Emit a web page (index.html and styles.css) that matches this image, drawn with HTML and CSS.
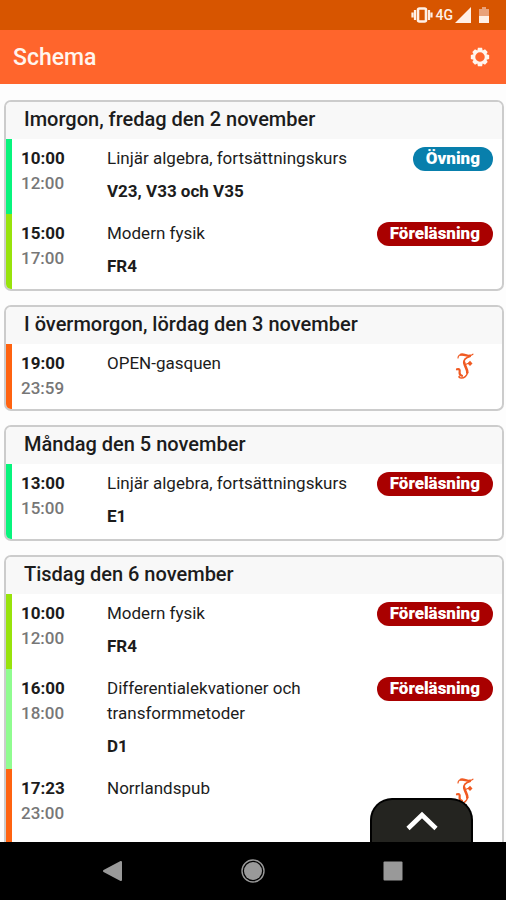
FILE: index.html
```html
<!DOCTYPE html>
<html lang="sv">
<head>
<meta charset="utf-8">
<meta name="viewport" content="width=device-width, initial-scale=1">
<title>Schema</title>
<link rel="stylesheet" href="styles.css">
</head>
<body>
<svg class="defs" aria-hidden="true">
  <symbol id="logo" viewBox="0 0 20 28">
    <g fill="none" stroke="currentColor" stroke-linecap="round" stroke-linejoin="round">
      <path stroke-width="1.200" d="M3 6C3 3.800 5 2.200 7.500 2.600"/>
      <path stroke-width="2.400" d="M6 2.600C9 1.700 12 4.600 15 3.700"/>
      <path stroke-width="1.200" d="M15 3.700Q17 3.300 18 2.200"/>
      <path stroke-width="1.700" d="M15 4.500C11 5.500 8.500 8 9 11"/>
      <path stroke-width="2.600" d="M9.200 10.500C9.500 14 12.600 17 12.300 20.500"/>
      <path stroke-width="1.500" d="M12.500 20.500C12 24 9 26 6.500 26C4.500 26 3.500 25.200 4.200 24.400"/>
      <path stroke-width="2.200" d="M2 17.300C4.500 16.500 5 18 4.600 20.500C4.400 23 5.500 23.400 7 23.800"/>
      <path stroke-width="1.200" d="M10.500 12.500L14 11"/>
    </g>
    <path fill="currentColor" d="M15 8.800L17.500 11.500L15 14L12.500 11.500Z"/>
  </symbol>
</svg>
<div class="screen">
  <div class="status">
    <svg class="vibrate" viewBox="0 0 22 16" aria-hidden="true"><rect x="7" y="1.500" width="8" height="13" rx="1.500" fill="none" stroke="currentColor" stroke-width="2.600"/><path d="M4 3v10M18 3v10M1.500 5.500v5M20.500 5.500v5" fill="none" stroke="currentColor" stroke-width="2.200"/></svg>
    <span class="network">4G</span>
    <svg class="signal" viewBox="0 0 16 16" aria-hidden="true"><path d="M0 16L16 0V16Z" fill="currentColor"/></svg>
    <svg class="battery" viewBox="0 0 10 16" aria-hidden="true"><path d="M0 2H3V0H7V2H10V9H0Z" fill="#e9a27a"/><path d="M0 9H10V16H0Z" fill="currentColor"/></svg>
  </div>
  <header class="bar">
    <h1>Schema</h1>
    <button class="settings" type="button" aria-label="Inställningar">
      <svg viewBox="0 0 24 24" aria-hidden="true"><path fill="currentColor" fill-rule="evenodd" d="M9.500 1H14.500L15.200 4.300L18 2.800L21.200 6L19.700 8.800L23 9.500V14.500L19.700 15.200L21.200 18L18 21.200L15.200 19.700L14.500 23H9.500L8.800 19.700L6 21.200L2.800 18L4.300 15.200L1 14.500V9.500L4.300 8.800L2.800 6L6 2.800L8.800 4.300ZM12 6.300A5.700 5.700 0 1 0 12 17.700A5.700 5.700 0 1 0 12 6.300Z"/></svg>
    </button>
  </header>
  <main class="days">
    <section class="day">
      <h2>Imorgon, fredag den 2 november</h2>
      <article class="event spring">
        <div class="time"><b>10:00</b><span>12:00</span></div>
        <div class="what"><p>Linjär algebra, fortsättningskurs</p><p class="room">V23, V33 och V35</p></div>
        <span class="tag exercise">Övning</span>
      </article>
      <article class="event lime">
        <div class="time"><b>15:00</b><span>17:00</span></div>
        <div class="what"><p>Modern fysik</p><p class="room">FR4</p></div>
        <span class="tag">Föreläsning</span>
      </article>
    </section>
    <section class="day">
      <h2>I övermorgon, lördag den 3 november</h2>
      <article class="event orange">
        <div class="time"><b>19:00</b><span>23:59</span></div>
        <div class="what"><p>OPEN-gasquen</p></div>
        <svg class="logo" aria-hidden="true"><use href="#logo"/></svg>
      </article>
    </section>
    <section class="day">
      <h2>Måndag den 5 november</h2>
      <article class="event spring">
        <div class="time"><b>13:00</b><span>15:00</span></div>
        <div class="what"><p>Linjär algebra, fortsättningskurs</p><p class="room">E1</p></div>
        <span class="tag">Föreläsning</span>
      </article>
    </section>
    <section class="day">
      <h2>Tisdag den 6 november</h2>
      <article class="event lime">
        <div class="time"><b>10:00</b><span>12:00</span></div>
        <div class="what"><p>Modern fysik</p><p class="room">FR4</p></div>
        <span class="tag">Föreläsning</span>
      </article>
      <article class="event mint">
        <div class="time"><b>16:00</b><span>18:00</span></div>
        <div class="what"><p>Differentialekvationer och transformmetoder</p><p class="room">D1</p></div>
        <span class="tag">Föreläsning</span>
      </article>
      <article class="event orange last">
        <div class="time"><b>17:23</b><span>23:00</span></div>
        <div class="what"><p>Norrlandspub</p></div>
        <svg class="logo" aria-hidden="true"><use href="#logo"/></svg>
      </article>
    </section>
  </main>
  <nav class="system">
    <button class="expand" type="button" aria-label="Visa meny"><svg viewBox="0 0 32 20" aria-hidden="true"><path d="M2 17.500L16 4L30 17.500" fill="none" stroke="currentColor" stroke-width="4.600"/></svg></button>
    <button type="button" aria-label="Tillbaka"><svg viewBox="0 0 24 24" aria-hidden="true"><path d="M3 12L20 3V21Z" fill="currentColor" stroke="currentColor" stroke-width="2" stroke-linejoin="round"/></svg></button>
    <button type="button" aria-label="Hem"><svg viewBox="0 0 24 24" aria-hidden="true"><circle cx="12" cy="12" r="9" fill="currentColor"/><circle cx="12" cy="12" r="11" fill="none" stroke="currentColor" stroke-width="1.400"/></svg></button>
    <button type="button" aria-label="Översikt"><svg viewBox="0 0 24 24" aria-hidden="true"><rect x="2.500" y="2.500" width="19" height="19" rx="1" fill="currentColor"/></svg></button>
  </nav>
</div>
</body>
</html>
```

FILE: styles.css
```css
* { box-sizing: border-box; }
body { margin: 0; background: #fdfdfd; color: #1c1c1c; font: 17px/25px Roboto, sans-serif; }
h1, h2, p { margin: 0; font-weight: 500; }
button { display: flex; align-items: center; justify-content: center; padding: 0; border: 0; background: none; color: inherit; }
.defs { position: absolute; width: 0; height: 0; }
.screen { display: flex; flex-direction: column; height: 100vh; }

.status { display: flex; align-items: center; justify-content: flex-end; flex: none; height: 30px; padding-right: 17px; background: #d75500; color: #fff0e6; }
.vibrate { width: 22px; height: 16px; margin-right: 3px; }
.network { margin-right: 2px; font-size: 14px; font-weight: 500; }
.signal { width: 16px; height: 16px; margin-right: 8px; }
.battery { width: 10px; height: 16px; }

.bar { display: flex; align-items: center; justify-content: space-between; flex: none; height: 54px; padding: 0 16px 0 13px; background: #ff652c; color: #fff5ee; }
.bar h1 { font-size: 23px; }
.settings svg { width: 20px; height: 20px; }

.days { display: flex; flex: 1; flex-direction: column; gap: 14px; min-height: 0; padding: 16px 2px 0 4px; overflow: hidden auto; scrollbar-width: none; }
.day { flex: none; border: 2px solid #ccc; border-radius: 7px; background: #fff; overflow: hidden; }
.day h2 { height: 37px; padding-left: 18px; background: #f8f8f8; font-size: 20px; line-height: 35px; }

.event { display: flex; align-items: flex-start; padding: 7px 9px 8px 9px; border-left: 6px solid; }
.spring { border-color: #08f47d; }
.lime { border-color: #98e30c; }
.mint { border-color: #90fc90; }
.orange { border-color: #ff6310; }
.last { padding-bottom: 24px; }
.time { display: flex; flex: none; flex-direction: column; width: 86px; color: #777; font-weight: 500; }
.time b { color: #1c1c1c; font-weight: 700; }
.what { flex: 1; min-width: 0; padding-right: 24px; }
.what p { font-weight: 400; }
.what .room { margin: 8px 0 2px; font-weight: 700; }
.tag { flex: none; height: 24px; margin-top: 1px; padding: 0 13px; border-radius: 12px; background: #a90000; color: #fff; font-weight: 900; line-height: 22px; }
.exercise { background: #087fac; }
.logo { flex: none; width: 20px; height: 28px; margin: 1px 18px 0 0; color: #f05a22; }

.system { position: relative; display: flex; flex: none; align-items: center; height: 58px; padding: 0 43px; background: #000; color: #999; }
.system button { flex: 1; height: 58px; }
.system svg { width: 24px; height: 24px; }
.system .expand { position: absolute; right: 33px; bottom: 58px; width: 103px; height: 44px; border: 2px solid #000; border-bottom: 0; border-radius: 22px 22px 0 0; background: #242420; color: #fff; }
.system .expand svg { width: 32px; height: 20px; }
```
